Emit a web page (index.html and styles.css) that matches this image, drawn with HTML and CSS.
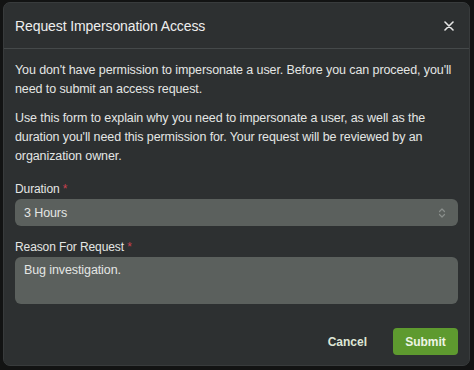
FILE: index.html
```html
<!DOCTYPE html>
<html lang="en">
<head>
    <meta charset="UTF-8">
    <meta name="viewport" content="width=device-width, initial-scale=1.0">
    <title>Request Impersonation Access</title>
    <link rel="stylesheet" href="styles.css">
</head>
<body>

    <div class="backdrop">
        <div class="modal">
            <div class="modal-header">
                <h1>Request Impersonation Access</h1>
                <button class="close-button" aria-label="Close">
                    <svg width="10" height="10" viewBox="0 0 10 10">
                        <path d="M1 1 L9 9 M9 1 L1 9" stroke="#e6e6e6" stroke-width="1.6" stroke-linecap="round"/>
                    </svg>
                </button>
            </div>

            <div class="modal-body">
                <p>You don't have permission to impersonate a user. Before you can proceed, you'll need to submit an access request.</p>
                <p>Use this form to explain why you need to impersonate a user, as well as the duration you'll need this permission for. Your request will be reviewed by an organization owner.</p>

                <label class="field-label">Duration <span class="required">*</span></label>
                <div class="select">
                    <span>3 Hours</span>
                    <svg width="8" height="12" viewBox="0 0 8 12">
                        <path d="M1.5 4.5 L4 2 L6.5 4.5 M1.5 7.5 L4 10 L6.5 7.5" fill="none" stroke="#8a8f8c" stroke-width="1.2" stroke-linecap="round" stroke-linejoin="round"/>
                    </svg>
                </div>

                <label class="field-label">Reason For Request <span class="required">*</span></label>
                <div class="textarea">Bug investigation.</div>
            </div>

            <div class="modal-footer">
                <button class="cancel-button">Cancel</button>
                <button class="submit-button">Submit</button>
            </div>
        </div>
    </div>

</body>
</html>
```

FILE: styles.css
```css
/* page */
body {
    margin: 0;
    font-family: "Liberation Sans", Arial, sans-serif;
    background-color: #121313;
    color: #e4e6e4;
}
.backdrop {
    height: 370px;
    box-sizing: border-box;
    padding: 2px 4px 4px 3px;
}

/* modal */
.modal {
    height: 100%;
    box-sizing: border-box;
    background-color: #2d3031;
    border: 1px solid #383b3c;
    border-radius: 7px;
    display: flex;
    flex-direction: column;
}
.modal-header {
    height: 45px;
    flex: none;
    display: flex;
    align-items: center;
    justify-content: space-between;
    padding: 0 11px;
    border-bottom: 1px solid #45494a;
}
.modal-header h1 {
    margin: 0;
    font-size: 14px;
    font-weight: 400;
    letter-spacing: -0.1px;
    color: #eeeeee;
}
.close-button {
    background: none;
    border: none;
    padding: 0;
    margin-right: 4px;
    display: flex;
    cursor: pointer;
}

.modal-body {
    padding: 12px 11px 0;
    font-size: 12.5px;
    letter-spacing: -0.1px;
}
.modal-body p {
    margin: 0 0 10px;
    line-height: 19px;
}
.modal-body p + p {
    margin-bottom: 16px;
}

.field-label {
    display: block;
    font-size: 12px;
    line-height: 15px;
    margin-bottom: 2px;
}
.required {
    color: #c8414f;
}

.select {
    height: 27px;
    box-sizing: border-box;
    background-color: #5b605d;
    border-radius: 6px;
    padding: 0 12px 0 9px;
    display: flex;
    align-items: center;
    justify-content: space-between;
    margin-bottom: 14px;
}
.textarea {
    height: 47px;
    box-sizing: border-box;
    background-color: #5b605d;
    border-radius: 6px;
    padding: 6px 9px;
}

.modal-footer {
    margin-top: auto;
    display: flex;
    justify-content: flex-end;
    align-items: center;
    gap: 10px;
    padding: 0 11px 10px;
}
button {
    font-family: inherit;
    cursor: pointer;
}
.cancel-button {
    background: none;
    border: none;
    color: #dfe6d6;
    font-size: 12px;
    font-weight: 600;
    padding: 6px 16px;
}
.submit-button {
    background-color: #5e9a2f;
    border: none;
    border-radius: 4px;
    color: #eef5e6;
    font-size: 12px;
    font-weight: 600;
    width: 65px;
    height: 27px;
}
```
